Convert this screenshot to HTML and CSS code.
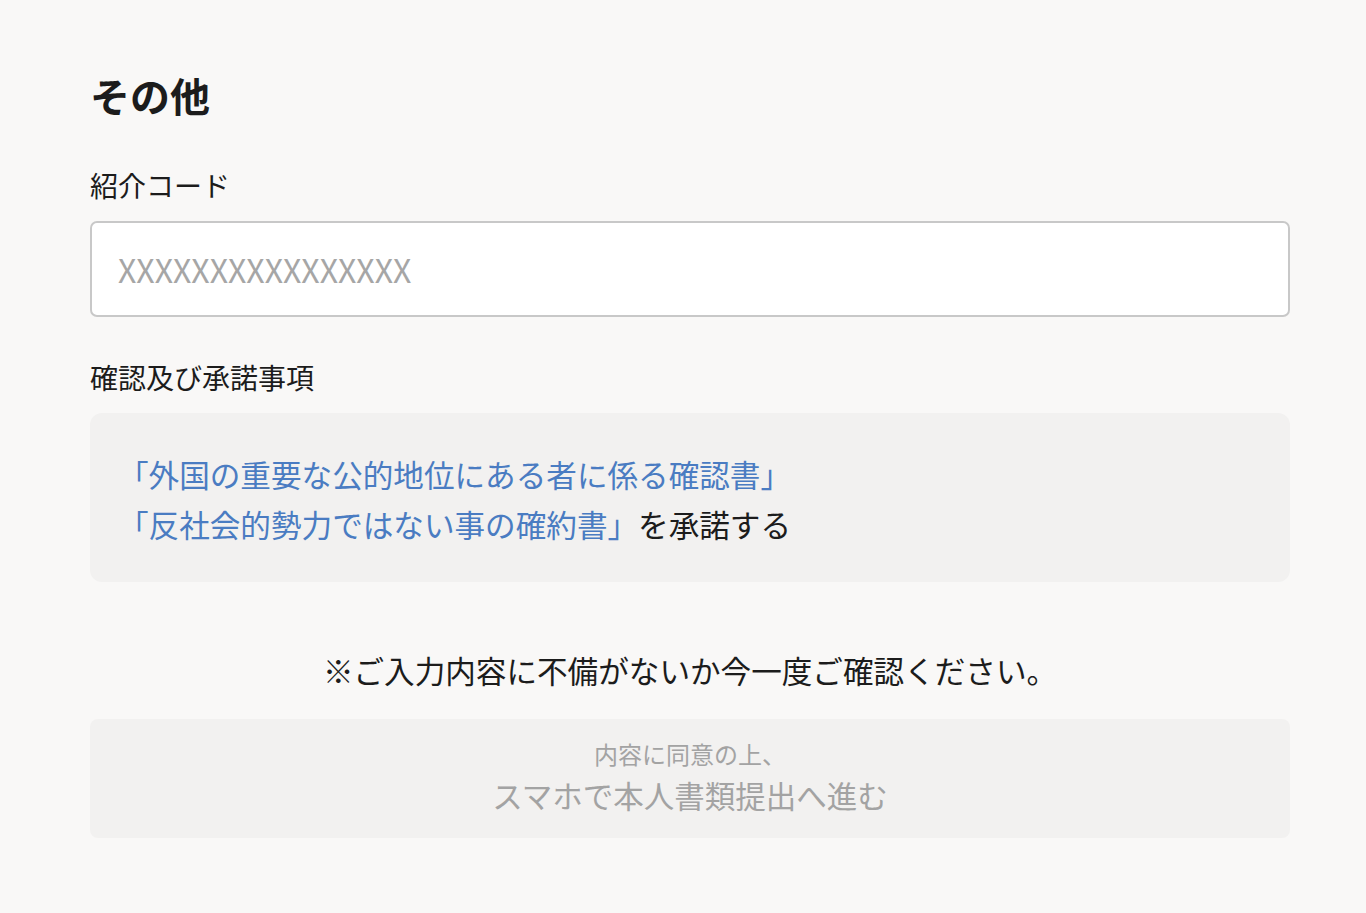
FILE: index.html
```html
<!DOCTYPE html>
<html lang="ja">
<head>
    <meta charset="utf-8">
    <title>その他</title>
    <link rel="stylesheet" href="styles.css">
</head>
<body>
    <div class="wrap">
        <h1 class="title">その他</h1>

        <!-- 紹介コード -->
        <p class="label">紹介コード</p>
        <input class="code-input" type="text" placeholder="XXXXXXXXXXXXXXXX">

        <!-- 確認及び承諾事項 -->
        <p class="label label-second">確認及び承諾事項</p>
        <div class="agree-box">
            <p class="agree-text">
                <a class="doc-link" href="#">「外国の重要な公的地位にある者に係る確認書」</a><br>
                <a class="doc-link" href="#">「反社会的勢力ではない事の確約書」</a>を承諾する
            </p>
        </div>

        <p class="notice">※ご入力内容に不備がないか今一度ご確認ください。</p>

        <button class="submit-btn" type="button" disabled>
            <span class="btn-sub">内容に同意の上、</span>
            <span class="btn-main">スマホで本人書類提出へ進む</span>
        </button>
    </div>
</body>
</html>
```

FILE: styles.css
```css
body {
    margin: 0;
    background-color: #f9f8f7;
    color: #1c1c1c;
    font-family: "Noto Sans CJK JP", "Noto Sans", sans-serif;
}
.wrap {
    width: 1200px;
    margin-left: 90px;
    padding-top: 65px;
    padding-bottom: 70px;
}
.title {
    margin: 0;
    font-size: 40px;
    font-weight: bold;
    line-height: 60px;
}
.label {
    margin: 40px 0 16px;
    font-size: 28px;
    line-height: 40px;
}
.label-second {
    margin-top: 40px;
}
.code-input {
    display: block;
    box-sizing: border-box;
    width: 100%;
    height: 96px;
    margin: 0;
    padding: 0 26px;
    border: 2px solid #c8c8c8;
    border-radius: 7px;
    background-color: #fff;
    font-family: "Noto Sans CJK JP", sans-serif;
    font-size: 32px;
    color: #1c1c1c;
    outline: none;
}
.code-input::placeholder {
    color: #a6a6a6;
}
.agree-box {
    background-color: #f2f1f0;
    border-radius: 12px;
    padding: 36px 28px 33px;
}
.agree-text {
    margin: 0;
    font-size: 30.6px;
    line-height: 50px;
}
.doc-link {
    color: #4a7cc2;
    text-decoration: none;
}
.notice {
    margin: 66px 0 27px;
    font-size: 30.6px;
    line-height: 44px;
    text-align: center;
}
.submit-btn {
    display: flex;
    flex-direction: column;
    align-items: center;
    box-sizing: border-box;
    width: 100%;
    height: 119px;
    padding: 18px 0 0;
    border: none;
    border-radius: 8px;
    background-color: #f2f1f0;
    color: #a3a3a3;
    font-family: "Noto Sans CJK JP", sans-serif;
}
.btn-sub {
    font-size: 24px;
    line-height: 34px;
}
.btn-main {
    font-size: 30.5px;
    line-height: 48px;
}
```
